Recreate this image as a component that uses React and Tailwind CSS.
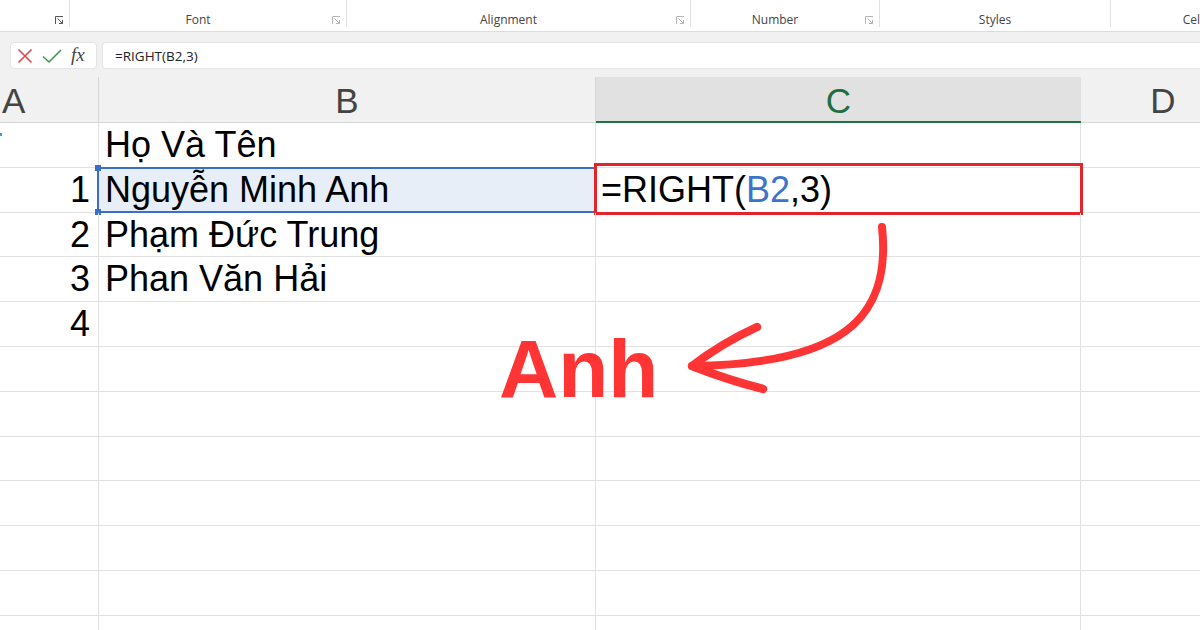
import React from "react";

function Launcher({ dark }) {
  return (
    <svg width="9" height="9" viewBox="0 0 9 9" className="shrink-0">
      <path d="M0.5 8V0.5H8" fill="none" stroke={dark ? "#555" : "#b5b5b5"} strokeWidth="1" />
      <path d="M2.5 2.5L7.5 7.5M7.5 4V7.5H4" fill="none" stroke={dark ? "#555" : "#b5b5b5"} strokeWidth="1" />
    </svg>
  );
}

function Group({ w, label, launcher, dark, last }) {
  return (
    <div className={`h-[27px] shrink-0 flex items-end ${last ? "" : "border-r border-[#e1e1e1]"}`} style={{ width: w }}>
      <div className="flex-1 text-center text-[12px] leading-[14px] text-[#444]">{label}</div>
      {launcher ? (
        <div className="w-[20px] flex justify-center pb-[2px]">
          <Launcher dark={dark} />
        </div>
      ) : null}
    </div>
  );
}

function Ribbon() {
  return (
    <div className="h-[32px] shrink-0 bg-white border-b border-[#dcdcdc] flex font-['Open_Sans','Noto_Sans',sans-serif]">
      <Group w={70} label="" launcher dark />
      <Group w={277} label="Font" launcher />
      <Group w={344} label="Alignment" launcher />
      <Group w={189} label="Number" launcher />
      <Group w={231} label="Styles" />
      <div className="h-[27px] flex-1 flex items-end justify-end">
        <div className="text-[12px] leading-[14px] text-[#444] whitespace-nowrap">Cel</div>
      </div>
    </div>
  );
}

function FormulaBar() {
  return (
    <div className="h-[45px] shrink-0 bg-[#f1f1f1] pt-[10px] flex items-start">
      <div className="ml-[10px] w-[87px] h-[27px] bg-white rounded-[4px] border border-[#e4e4e4] flex items-center pl-[6px] gap-[9px]">
        <svg width="16" height="16" viewBox="0 0 16 16">
          <path d="M1.5 1.5L14.5 14.5M14.5 1.5L1.5 14.5" stroke="#e0474c" strokeWidth="1.6" fill="none" />
        </svg>
        <svg width="20" height="16" viewBox="0 0 20 16">
          <path d="M1 8.5L7 14L19 2" stroke="#3d9b4f" strokeWidth="1.6" fill="none" />
        </svg>
        <span className="font-['Liberation_Serif',serif] italic text-[19px] leading-none text-[#444] -mt-[3px]">fx</span>
      </div>
      <div className="ml-[5px] flex-1 h-[27px] bg-white rounded-l-[4px] border border-r-0 border-[#e4e4e4] flex items-center pl-[12px] pt-[1px] font-['Open_Sans','Noto_Sans',sans-serif] text-[13.5px] text-[#222]">
        =RIGHT(B2,3)
      </div>
    </div>
  );
}

const data = [
  { a: "", b: "Họ Và Tên" },
  { a: "1", b: "Nguyễn Minh Anh", sel: true, c: true },
  { a: "2", b: "Phạm Đức Trung" },
  { a: "3", b: "Phan Văn Hải" },
  { a: "4", b: "" },
  {}, {}, {}, {}, {}, {}, {},
];

function Grid() {
  return (
    <div className="flex-1 flex flex-col overflow-hidden bg-white font-['Liberation_Sans',Arial,sans-serif]">
      <div className="h-[46px] shrink-0 flex bg-[#f1f1f1] text-[35px] leading-none text-[#444]">
        <div className="w-[99px] shrink-0 border-r border-b border-[#d6d6d6] flex items-center pl-[2px] pt-[2px]">A</div>
        <div className="w-[497px] shrink-0 border-r border-b border-[#d6d6d6] flex items-center justify-center pt-[2px]">B</div>
        <div className="w-[485px] shrink-0 bg-[#e1e1e1] border-b-2 border-[#217346] flex items-center justify-center pt-[3px] text-[#1e6e42]">C</div>
        <div className="w-[164px] shrink-0 border-b border-[#d6d6d6] flex items-center justify-center pt-[2px]">D</div>
        <div className="flex-1 border-b border-[#d6d6d6]" />
      </div>
      {data.map((r, i) => (
        <div key={i} className="h-[44.8px] shrink-0 flex border-b border-[#e1e1e1] text-[36px] leading-[43.8px] text-black">
          <div className="relative w-[99px] shrink-0 border-r border-[#e1e1e1] text-right pr-[8px]">
            {i === 0 ? <div className="absolute left-0 top-[10px] w-[2px] h-[3px] bg-[#2aa3e0]" /> : null}
            {r.a}
          </div>
          <div className={`relative w-[497px] shrink-0 border-r border-[#e1e1e1] pl-[6px] whitespace-nowrap ${r.sel ? "bg-[#e8eef8]" : ""}`}>
            {r.b}
            {r.sel ? (
              <>
                <div className="absolute -top-[1px] -left-[2px] -right-[1px] -bottom-[1px] border-2 border-r-0 border-[#3a6fc6]" />
                <div className="absolute -top-[3px] -left-[4px] w-[6px] h-[6px] bg-[#3a6fc6]" />
                <div className="absolute -bottom-[3px] -left-[4px] w-[6px] h-[6px] bg-[#3a6fc6]" />
              </>
            ) : null}
          </div>
          <div className="relative w-[485px] shrink-0 border-r border-[#e1e1e1] pl-[5px] whitespace-nowrap">
            {r.c ? (
              <>
                <span>=RIGHT(</span>
                <span className="text-[#3b74cc]">B2</span>
                <span>,3)</span>
                <div className="absolute -top-[5px] -left-[2px] -right-[3px] -bottom-[3px] border-[3px] border-[#e4232b]" />
              </>
            ) : null}
          </div>
          <div className="flex-1" />
        </div>
      ))}
    </div>
  );
}

function Annotation() {
  return (
    <>
      <div className="absolute left-[499px] top-[328px] font-['Liberation_Sans',Arial,sans-serif] font-bold text-[82px] leading-none text-[#ff3434]">
        Anh
      </div>
      <svg className="absolute inset-0 pointer-events-none" width="1200" height="630" viewBox="0 0 1200 630">
        <path d="M882 227 C892 320 840 364 692 366" fill="none" stroke="#ff3434" strokeWidth="8" strokeLinecap="round" />
        <path d="M757 327 Q722 343 692 366 Q728 380 763 389" fill="none" stroke="#ff3434" strokeWidth="8.5" strokeLinecap="round" strokeLinejoin="round" />
      </svg>
    </>
  );
}

export default function App() {
  return (
    <div className="relative w-[1200px] h-[630px] overflow-hidden bg-white flex flex-col">
      <Ribbon />
      <FormulaBar />
      <Grid />
      <Annotation />
    </div>
  );
}
